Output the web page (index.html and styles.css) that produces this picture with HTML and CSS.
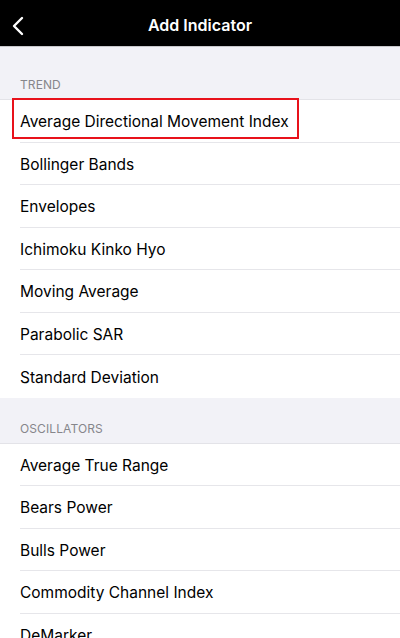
FILE: index.html
```html
<!DOCTYPE html>
<html>
<head>
<meta charset="utf-8">
<link rel="stylesheet" href="styles.css">
</head>
<body>
<header class="navbar">
  <svg class="back" width="14" height="20" viewBox="0 0 14 20"><path d="M11 2 L3 10 L11 18" fill="none" stroke="#fff" stroke-width="2.4" stroke-linecap="round" stroke-linejoin="round"/></svg>
  <h1 class="title">Add Indicator</h1>
</header>
<main class="content">
  <div class="section-head first">TREND</div>
  <ul class="list">
    <li class="row"><span class="label highlight">Average Directional Movement Index</span></li>
    <li class="row"><span class="label">Bollinger Bands</span></li>
    <li class="row"><span class="label">Envelopes</span></li>
    <li class="row"><span class="label">Ichimoku Kinko Hyo</span></li>
    <li class="row"><span class="label">Moving Average</span></li>
    <li class="row"><span class="label">Parabolic SAR</span></li>
    <li class="row last"><span class="label">Standard Deviation</span></li>
  </ul>
  <div class="section-head">OSCILLATORS</div>
  <ul class="list">
    <li class="row"><span class="label">Average True Range</span></li>
    <li class="row"><span class="label">Bears Power</span></li>
    <li class="row"><span class="label">Bulls Power</span></li>
    <li class="row"><span class="label">Commodity Channel Index</span></li>
    <li class="row"><span class="label">DeMarker</span></li>
  </ul>
</main>
</body>
</html>
```
FILE: styles.css
```css
* { box-sizing: border-box; }
html, body { margin: 0; padding: 0; }
body {
  width: 400px;
  height: 638px;
  overflow: hidden;
  background: #f2f2f7;
  font-family: "Inter", "Liberation Sans", sans-serif;
  -webkit-font-smoothing: antialiased;
}
.navbar {
  height: 47px;
  padding-top: 4px;
  background: #000;
  border-bottom: 1px solid #c8c8cc;
  display: flex;
  align-items: center;
  justify-content: center;
  position: relative;
}
.back {
  position: absolute;
  left: 11px;
  top: 16px;
}
.title {
  margin: 0;
  color: #fff;
  font-size: 16px;
  font-weight: 600;
  letter-spacing: 0;
}
.section-head {
  height: 46px;
  padding: 0 20px 7px;
  display: flex;
  align-items: flex-end;
  font-size: 12px;
  color: #86868b;
  letter-spacing: 0.1px;
  border-bottom: 1px solid #e3e3e8;
}
.section-head.first { height: 53px; }
.list {
  list-style: none;
  margin: 0;
  padding: 0 0 0 20px;
  background: #fff;
}
.row {
  height: 42.5px;
  padding-top: 2px;
  display: flex;
  align-items: center;
  border-bottom: 1px solid #e6e6ea;
  font-size: 15.5px;
  color: #000;
}
.row.last { border-bottom: none; }
.label { position: relative; }
.highlight::after {
  content: "";
  position: absolute;
  left: -8px;
  right: -10px;
  top: -14px;
  bottom: -8px;
  border: 2px solid #e8121b;
}
```
